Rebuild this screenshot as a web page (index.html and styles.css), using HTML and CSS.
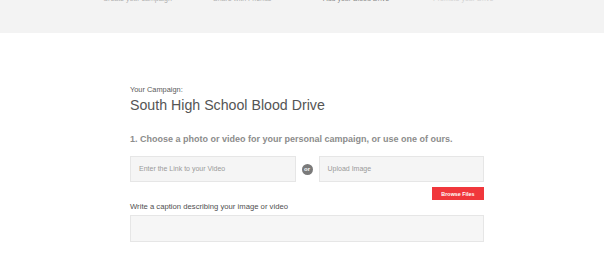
FILE: index.html
```html
<!DOCTYPE html>
<html>
<head>
<meta charset="utf-8">
<link rel="stylesheet" href="styles.css">
</head>
<body>
<header class="steps">
  <span class="step">Create your campaign</span>
  <span class="step">Share with Friends</span>
  <span class="step step-active">Add your Blood Drive</span>
  <span class="step step-muted">Promote your Drive</span>
</header>
<main class="content">
  <div class="eyebrow">Your Campaign:</div>
  <h1 class="title">South High School Blood Drive</h1>
  <h2 class="section">1. Choose a photo or video for your personal campaign, or use one of ours.</h2>
  <div class="media-row">
    <div class="field">Enter the Link to your Video</div>
    <div class="or">or</div>
    <div class="field">Upload Image</div>
  </div>
  <div class="actions">
    <button class="browse">Browse Files</button>
  </div>
  <label class="caption-label">Write a caption describing your image or video</label>
  <div class="caption-box"></div>
</main>
</body>
</html>
```
FILE: styles.css
```css
html, body {
  margin: 0;
  padding: 0;
  background: #ffffff;
  font-family: "Liberation Sans", Arial, sans-serif;
}

.steps {
  height: 33px;
  background: #f3f3f3;
  display: flex;
  align-items: flex-start;
  padding-left: 103px;
  overflow: hidden;
}

.step {
  font-size: 7px;
  line-height: 8px;
  margin-top: -5px;
  color: #b0b0b0;
  width: 110px;
}

.step-active {
  color: #8a8a8a;
}

.step-muted {
  color: #d2d2d2;
}

.content {
  margin-left: 130px;
  width: 354px;
  padding-top: 52px;
}

.eyebrow {
  font-size: 7.4px;
  line-height: 9px;
  color: #5a5a5a;
}

.title {
  margin: 0;
  margin-top: 2px;
  font-size: 14.2px;
  line-height: 18px;
  font-weight: normal;
  color: #555555;
}

.section {
  margin: 0;
  margin-top: 19px;
  font-size: 9px;
  line-height: 12px;
  font-weight: bold;
  color: #8c8c8c;
}

.media-row {
  margin-top: 11px;
  display: flex;
  align-items: center;
  gap: 6px;
}

.field {
  flex: 1;
  height: 26px;
  box-sizing: border-box;
  background: #f5f5f5;
  border: 1px solid #e6e6e6;
  font-size: 7px;
  line-height: 24px;
  padding-left: 8px;
  color: #9a9a9a;
}

.or {
  width: 11px;
  height: 11px;
  border-radius: 50%;
  background: #7a7a7a;
  color: #ffffff;
  font-size: 6px;
  font-weight: bold;
  line-height: 11px;
  text-align: center;
  flex: none;
}

.actions {
  display: flex;
  justify-content: flex-end;
  margin-top: 5px;
}

.browse {
  width: 52px;
  height: 13px;
  border: 0;
  padding: 0;
  background: #f0373c;
  color: #ffffff;
  font-family: "Liberation Sans", Arial, sans-serif;
  font-size: 5.4px;
  font-weight: bold;
}

.caption-label {
  display: block;
  margin-top: 2px;
  font-size: 7.7px;
  line-height: 10px;
  color: #4f4f4f;
}

.caption-box {
  margin-top: 3px;
  height: 25px;
  background: #f6f6f6;
  border: 1px solid #e6e6e6;
}
```
